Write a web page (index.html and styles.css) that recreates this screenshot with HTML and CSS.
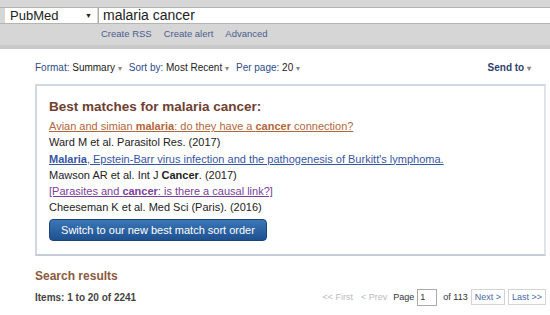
FILE: index.html
```html
<!DOCTYPE html>
<html lang="en">
<head>
    <meta charset="UTF-8">
    <title>malaria cancer - PubMed</title>
    <link rel="stylesheet" href="styles.css">
</head>
<body>

<header class="search-bar">
    <div class="search-row">
        <div class="db-select">
            <span>PubMed</span>
            <span class="db-arrow">&#9660;</span>
        </div>
        <div class="search-input">malaria cancer</div>
    </div>
    <div class="search-links">
        <a href="#">Create RSS</a>
        <a href="#">Create alert</a>
        <a href="#">Advanced</a>
    </div>
</header>

<main class="content">
    <div class="display-settings">
        <div class="settings-left">
            <span class="setting"><span class="label">Format:</span> Summary <span class="caret">&#9662;</span></span>
            <span class="setting"><span class="label">Sort by:</span> Most Recent <span class="caret">&#9662;</span></span>
            <span class="setting"><span class="label">Per page:</span> 20 <span class="caret">&#9662;</span></span>
        </div>
        <span class="send-to">Send to <span class="caret">&#9662;</span></span>
    </div>

    <div class="best-match">
        <h2>Best matches for malaria cancer:</h2>
        <div class="match">
            <a href="#" class="visited">Avian and simian <b>malaria</b>: do they have a <b>cancer</b> connection?</a>
            <div class="cite">Ward M et al. Parasitol Res. (2017)</div>
        </div>
        <div class="match">
            <a href="#" class="fresh"><b>Malaria</b>, Epstein-Barr virus infection and the pathogenesis of Burkitt's lymphoma.</a>
            <div class="cite">Mawson AR et al. Int J <b>Cancer</b>. (2017)</div>
        </div>
        <div class="match">
            <a href="#" class="foreign">[Parasites and <b>cancer</b>: is there a causal link?]</a>
            <div class="cite">Cheeseman K et al. Med Sci (Paris). (2016)</div>
        </div>
        <button class="switch-btn">Switch to our new best match sort order</button>
    </div>

    <h3 class="results-title">Search results</h3>
    <div class="results-bar">
        <span class="items">Items: 1 to 20 of 2241</span>
        <div class="pager">
            <span class="off">&lt;&lt; First</span>
            <span class="off">&lt; Prev</span>
            <span class="page-label">Page</span>
            <span class="page-box">1</span>
            <span class="page-label">of 113</span>
            <span class="pager-btn">Next &gt;</span>
            <span class="pager-btn">Last &gt;&gt;</span>
        </div>
    </div>
</main>

</body>
</html>
```

FILE: styles.css
```css
body {
    margin: 0;
    font-family: "Liberation Sans", Arial, sans-serif;
    color: #222;
    background: #fff;
}

.search-bar {
    background: #d6d6d6;
    border-bottom: 4px solid #c9c9c9;
    padding: 7px 0 4px;
}

.search-row {
    display: flex;
    align-items: stretch;
    border-top: 1px solid #b4b4b4;
    border-bottom: 1px solid #b4b4b4;
}

.db-select {
    width: 87px;
    margin-left: 5px;
    padding-left: 5px;
    background: #fff;
    display: flex;
    justify-content: space-between;
    align-items: center;
    font-size: 13px;
    height: 15px;
    margin-right: 1px;
}

.db-arrow {
    font-size: 7px;
    padding-right: 5px;
}

.search-input {
    flex: 1;
    background: #fff;
    font-size: 14px;
    padding-left: 4px;
    line-height: 15px;
    height: 15px;
    border-left: 1px solid #aaa;
}

.search-links {
    display: flex;
    gap: 12px;
    padding: 4px 0 0 101px;
    height: 13px;
    font-size: 9.5px;
}

.search-links a {
    color: #4b5d8e;
    text-decoration: none;
}

.content {
    padding: 0 4px 0 35px;
}

.display-settings {
    display: flex;
    justify-content: space-between;
    align-items: center;
    font-size: 10px;
    margin-top: 10px;
    height: 16px;
}

.settings-left {
    display: flex;
    gap: 7px;
}

.label {
    color: #2f4b8a;
}

.caret {
    color: #888;
    font-size: 8px;
}

.send-to {
    color: #2f3f6e;
    font-weight: bold;
    margin-right: 15px;
}

.best-match {
    margin-top: 9px;
    border: 2px solid #cfd8e4;
    border-right-color: #dde3ea;
    border-bottom-color: #c3ccd8;
    padding: 12px 12px 13px 12px;
}

.best-match h2 {
    margin: 0 0 2px;
    font-size: 13.5px;
    line-height: 18px;
    color: #6e4030;
}

.match a {
    display: block;
    font-size: 11px;
    line-height: 16px;
}

.visited {
    color: #b3653c;
}

.fresh {
    color: #3655a4;
}

.foreign {
    color: #7b3f9c;
}

.cite {
    font-size: 11px;
    line-height: 16px;
    margin-bottom: 0.5px;
}

.switch-btn {
    margin-top: 3px;
    width: 218px;
    height: 22px;
    padding: 0;
    font-family: inherit;
    font-size: 11px;
    color: #fff;
    background: linear-gradient(#3b76b6, #1f5190);
    border: 1px solid #1a4478;
    border-radius: 4px;
}

.results-title {
    margin: 13px 0 0;
    font-size: 12px;
    line-height: 14px;
    color: #8b5a3c;
}

.results-bar {
    display: flex;
    justify-content: space-between;
    align-items: center;
    margin-top: 6px;
}

.items {
    font-size: 10px;
    font-weight: bold;
    color: #444;
}

.pager {
    display: flex;
    align-items: center;
    gap: 6px;
    font-size: 9px;
    color: #333;
}

.off {
    color: #bbb;
}

.off + .off {
    margin-left: 2px;
}

.page-box {
    width: 16px;
    height: 15px;
    border: 1px solid #aaa;
    padding-left: 2px;
    margin-left: -3px;
    line-height: 15px;
}

.page-label {
    color: #333;
}

.pager-btn {
    color: #4b6aa8;
    border: 1px solid #d4d4d4;
    padding: 2px 3px;
    margin-left: -3px;
}
```
